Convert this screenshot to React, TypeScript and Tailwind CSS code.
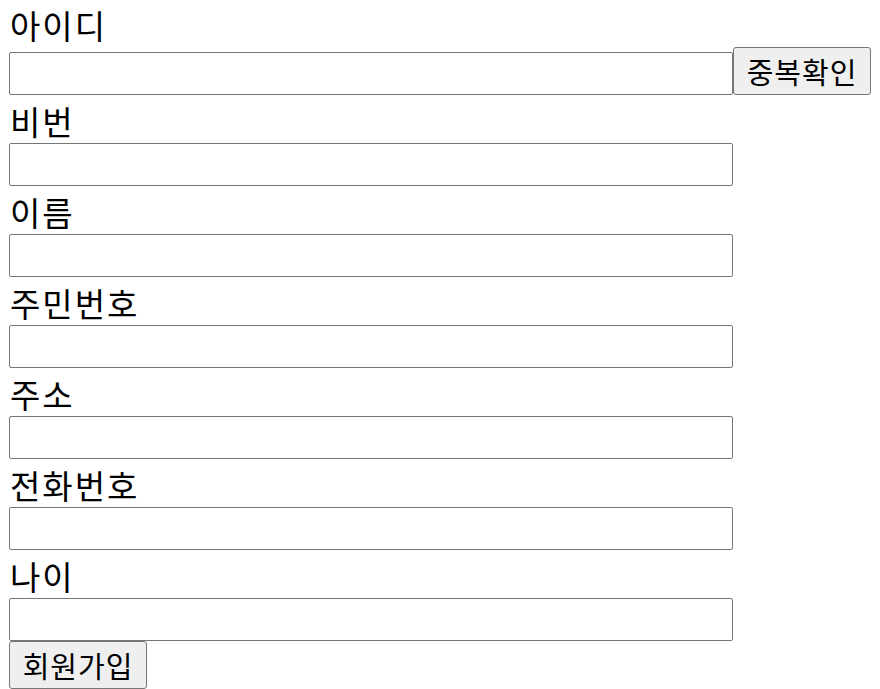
import React from "react";

const font = { fontFamily: '"Noto Sans CJK KR", "Noto Sans", sans-serif' };

function Label({ text }: { text: string }) {
  return (
    <div className="h-[48px] text-[33px] leading-[52px] tracking-[2px] text-black pl-[1px]">{text}</div>
  );
}

function Field() {
  return (
    <input
      type="text"
      className="block w-[724px] h-[43px] border border-[#767676] rounded-[2px] bg-white outline-none"
    />
  );
}

export default function App() {
  const rows = ["비번", "이름", "주민번호", "주소", "전화번호", "나이"];
  return (
    <div className="w-[880px] h-[689px] bg-white pl-[9px] overflow-hidden" style={font}>
      <div className="h-[47px] text-[33px] leading-[51px] tracking-[2px] text-black pl-[1px]">아이디</div>
      <div className="flex items-end">
        <input
          type="text"
          className="block w-[724px] h-[43px] border border-[#767676] rounded-[2px] bg-white outline-none"
        />
        <button className="h-[48px] w-[138px] bg-[#efefef] border border-[#767676] rounded-[3px] text-[29px] leading-none tracking-[1px] text-black">
          중복확인
        </button>
      </div>
      {rows.map((r) => (
        <div key={r}>
          <Label text={r} />
          <Field />
        </div>
      ))}
      <button className="block h-[48px] w-[138px] bg-[#efefef] border border-[#767676] rounded-[3px] text-[29px] leading-none tracking-[1px] text-black">
        회원가입
      </button>
    </div>
  );
}
